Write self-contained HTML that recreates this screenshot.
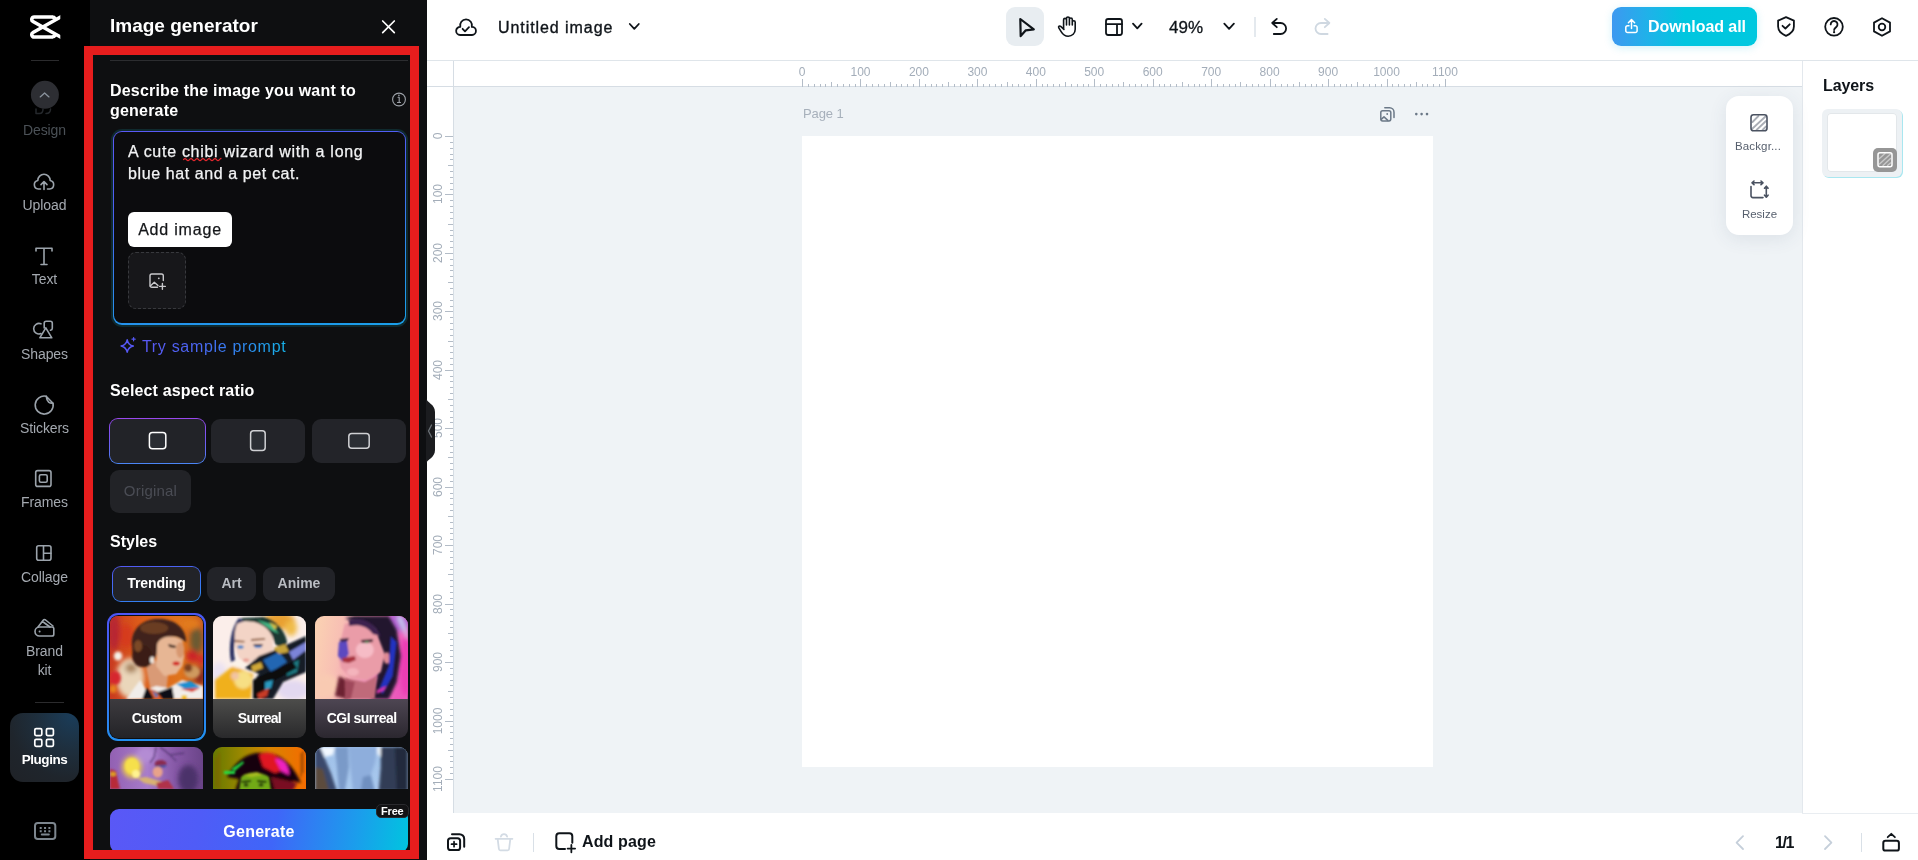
<!DOCTYPE html>
<html>
<head>
<meta charset="utf-8">
<title>Image generator</title>
<style>
*{box-sizing:border-box;margin:0;padding:0}
html,body{width:1918px;height:860px;overflow:hidden;background:#fff;font-family:"Liberation Sans",sans-serif;}
.abs{position:absolute}
#root{position:relative;width:1918px;height:860px;overflow:hidden;background:#fff;will-change:transform;transform:translateZ(0)}
/* ---------- left rail ---------- */
#rail{left:0;top:0;width:90px;height:860px;background:#000}
.rl{position:absolute;left:0;width:89px;text-align:center;color:#a4a9b0;font-size:14px;line-height:19px;letter-spacing:-.1px}
.ri{position:absolute}
/* ---------- panel ---------- */
#panel{left:90px;top:0;width:337px;height:860px;background:#0e0f11}
.h16{position:absolute;color:#fff;font-weight:700;font-size:16px;line-height:20px}
/* ---------- main ---------- */
#topbar{left:427px;top:0;width:1491px;height:61px;background:#fff;border-bottom:1px solid #dfe5ea}
#canvas{left:454px;top:87px;width:1348px;height:726px;background:#eff3f6}
#hruler{left:427px;top:61px;width:1375px;height:26px;background:#fff;border-bottom:1px solid #d6dde4}
#vruler{left:427px;top:61px;width:27px;height:752px;background:#fff;border-right:1px solid #d6dde4}
#layers{left:1802px;top:61px;width:116px;height:752px;background:#fff;border-left:1px solid #e3e8ed}
#bottombar{left:427px;top:813px;width:1491px;height:47px;background:#fff}
#page{left:802px;top:136px;width:631px;height:631px;background:#fff}
.rt{position:absolute;font-size:12px;color:#a3adb9;line-height:12px;white-space:nowrap}
</style>
</head>
<body>
<div id="root">

<!-- MAIN -->
<div id="topbar" class="abs"></div>
<div id="canvas" class="abs"></div>
<div id="hruler" class="abs"></div>
<div id="vruler" class="abs"></div>
<div id="page" class="abs"></div>
<div id="layers" class="abs"></div>
<div id="bottombar" class="abs"></div>
<svg class="abs" style="left:427px;top:61px" width="1375" height="26"><path d="M375.5 18V26M381.5 23V26M387.5 23V26M393.5 23V26M398.5 23V26M404.5 21V26M410.5 23V26M416.5 23V26M422.5 23V26M428.5 23V26M433.5 18V26M439.5 23V26M445.5 23V26M451.5 23V26M457.5 23V26M463.5 21V26M469.5 23V26M474.5 23V26M480.5 23V26M486.5 23V26M492.5 18V26M498.5 23V26M504.5 23V26M509.5 23V26M515.5 23V26M521.5 21V26M527.5 23V26M533.5 23V26M539.5 23V26M545.5 23V26M550.5 18V26M556.5 23V26M562.5 23V26M568.5 23V26M574.5 23V26M580.5 21V26M585.5 23V26M591.5 23V26M597.5 23V26M603.5 23V26M609.5 18V26M615.5 23V26M620.5 23V26M626.5 23V26M632.5 23V26M638.5 21V26M644.5 23V26M650.5 23V26M656.5 23V26M661.5 23V26M667.5 18V26M673.5 23V26M679.5 23V26M685.5 23V26M691.5 23V26M696.5 21V26M702.5 23V26M708.5 23V26M714.5 23V26M720.5 23V26M726.5 18V26M732.5 23V26M737.5 23V26M743.5 23V26M749.5 23V26M755.5 21V26M761.5 23V26M767.5 23V26M772.5 23V26M778.5 23V26M784.5 18V26M790.5 23V26M796.5 23V26M802.5 23V26M808.5 23V26M813.5 21V26M819.5 23V26M825.5 23V26M831.5 23V26M837.5 23V26M843.5 18V26M848.5 23V26M854.5 23V26M860.5 23V26M866.5 23V26M872.5 21V26M878.5 23V26M884.5 23V26M889.5 23V26M895.5 23V26M901.5 18V26M907.5 23V26M913.5 23V26M919.5 23V26M924.5 23V26M930.5 21V26M936.5 23V26M942.5 23V26M948.5 23V26M954.5 23V26M960.5 18V26M965.5 23V26M971.5 23V26M977.5 23V26M983.5 23V26M989.5 21V26M995.5 23V26M1000.5 23V26M1006.5 23V26M1012.5 23V26M1018.5 18V26" stroke="#b3bcc7" stroke-width="1" fill="none"/></svg>
<div class="rt" style="left:782.0px;top:66px;width:40px;text-align:center">0</div>
<div class="rt" style="left:840.5px;top:66px;width:40px;text-align:center">100</div>
<div class="rt" style="left:898.9px;top:66px;width:40px;text-align:center">200</div>
<div class="rt" style="left:957.4px;top:66px;width:40px;text-align:center">300</div>
<div class="rt" style="left:1015.8px;top:66px;width:40px;text-align:center">400</div>
<div class="rt" style="left:1074.2px;top:66px;width:40px;text-align:center">500</div>
<div class="rt" style="left:1132.7px;top:66px;width:40px;text-align:center">600</div>
<div class="rt" style="left:1191.2px;top:66px;width:40px;text-align:center">700</div>
<div class="rt" style="left:1249.6px;top:66px;width:40px;text-align:center">800</div>
<div class="rt" style="left:1308.1px;top:66px;width:40px;text-align:center">900</div>
<div class="rt" style="left:1366.5px;top:66px;width:40px;text-align:center">1000</div>
<div class="rt" style="left:1425.0px;top:66px;width:40px;text-align:center">1100</div>
<svg class="abs" style="left:427px;top:61px" width="26" height="752"><path d="M18 75.5H26M23 81.5H26M23 87.5H26M23 93.5H26M23 98.5H26M21 104.5H26M23 110.5H26M23 116.5H26M23 122.5H26M23 128.5H26M18 133.5H26M23 139.5H26M23 145.5H26M23 151.5H26M23 157.5H26M21 163.5H26M23 169.5H26M23 174.5H26M23 180.5H26M23 186.5H26M18 192.5H26M23 198.5H26M23 204.5H26M23 209.5H26M23 215.5H26M21 221.5H26M23 227.5H26M23 233.5H26M23 239.5H26M23 245.5H26M18 250.5H26M23 256.5H26M23 262.5H26M23 268.5H26M23 274.5H26M21 280.5H26M23 285.5H26M23 291.5H26M23 297.5H26M23 303.5H26M18 309.5H26M23 315.5H26M23 320.5H26M23 326.5H26M23 332.5H26M21 338.5H26M23 344.5H26M23 350.5H26M23 356.5H26M23 361.5H26M18 367.5H26M23 373.5H26M23 379.5H26M23 385.5H26M23 391.5H26M21 396.5H26M23 402.5H26M23 408.5H26M23 414.5H26M23 420.5H26M18 426.5H26M23 432.5H26M23 437.5H26M23 443.5H26M23 449.5H26M21 455.5H26M23 461.5H26M23 467.5H26M23 472.5H26M23 478.5H26M18 484.5H26M23 490.5H26M23 496.5H26M23 502.5H26M23 508.5H26M21 513.5H26M23 519.5H26M23 525.5H26M23 531.5H26M23 537.5H26M18 543.5H26M23 548.5H26M23 554.5H26M23 560.5H26M23 566.5H26M21 572.5H26M23 578.5H26M23 584.5H26M23 589.5H26M23 595.5H26M18 601.5H26M23 607.5H26M23 613.5H26M23 619.5H26M23 624.5H26M21 630.5H26M23 636.5H26M23 642.5H26M23 648.5H26M23 654.5H26M18 660.5H26M23 665.5H26M23 671.5H26M23 677.5H26M23 683.5H26M21 689.5H26M23 695.5H26M23 700.5H26M23 706.5H26M23 712.5H26M18 718.5H26" stroke="#b3bcc7" stroke-width="1" fill="none"/></svg>
<div class="rt" style="left:417.5px;top:130.0px;width:40px;text-align:center;transform:rotate(-90deg)">0</div>
<div class="rt" style="left:417.5px;top:188.4px;width:40px;text-align:center;transform:rotate(-90deg)">100</div>
<div class="rt" style="left:417.5px;top:246.9px;width:40px;text-align:center;transform:rotate(-90deg)">200</div>
<div class="rt" style="left:417.5px;top:305.4px;width:40px;text-align:center;transform:rotate(-90deg)">300</div>
<div class="rt" style="left:417.5px;top:363.8px;width:40px;text-align:center;transform:rotate(-90deg)">400</div>
<div class="rt" style="left:417.5px;top:422.2px;width:40px;text-align:center;transform:rotate(-90deg)">500</div>
<div class="rt" style="left:417.5px;top:480.7px;width:40px;text-align:center;transform:rotate(-90deg)">600</div>
<div class="rt" style="left:417.5px;top:539.2px;width:40px;text-align:center;transform:rotate(-90deg)">700</div>
<div class="rt" style="left:417.5px;top:597.6px;width:40px;text-align:center;transform:rotate(-90deg)">800</div>
<div class="rt" style="left:417.5px;top:656.1px;width:40px;text-align:center;transform:rotate(-90deg)">900</div>
<div class="rt" style="left:417.5px;top:714.5px;width:40px;text-align:center;transform:rotate(-90deg)">1000</div>
<div class="rt" style="left:417.5px;top:773.0px;width:40px;text-align:center;transform:rotate(-90deg)">1100</div>
<!-- top bar text -->
<div class="abs" style="left:498px;top:18px;font-size:16px;line-height:20px;color:#0f1419;letter-spacing:.93px;white-space:nowrap;-webkit-text-stroke:.35px #0f1419">Untitled image</div>
<div class="abs" style="left:1006px;top:7px;width:38px;height:39px;border-radius:9px;background:#e8edf1"></div>
<div class="abs" style="left:1169px;top:18px;font-size:17px;line-height:20px;color:#0f1419;white-space:nowrap;-webkit-text-stroke:.3px #0f1419">49%</div>
<div class="abs" style="left:1254px;top:17px;width:2px;height:20px;background:#e4e9ee"></div>
<div class="abs" style="left:1612px;top:7px;width:145px;height:39px;border-radius:9px;background:linear-gradient(90deg,#3d99f0 0%,#1fb2e9 25%,#00c6df 50%,#00c8df 100%);box-shadow:0 2px 8px rgba(0,190,220,.18)"></div>
<div class="abs" style="left:1648px;top:17px;font-size:16px;font-weight:700;line-height:20px;color:#fff;white-space:nowrap;letter-spacing:-.06px">Download all</div>
<div class="abs" style="left:427px;top:86px;width:27px;height:1px;background:#d6dde4"></div>
<!-- page label -->
<div class="abs" style="left:803px;top:106px;font-size:13px;line-height:16px;color:#a7b0bb;white-space:nowrap;letter-spacing:-.1px">Page 1</div>
<!-- floating card -->
<div class="abs" style="left:1726px;top:96px;width:67px;height:139px;border-radius:13px;background:#fff;box-shadow:0 4px 18px rgba(60,80,110,.10)"></div>
<div class="abs" style="left:1724.5px;top:139px;width:67px;text-align:center;font-size:11.5px;line-height:14px;color:#565f6d;white-space:nowrap;letter-spacing:.15px">Backgr...</div>
<div class="abs" style="left:1726px;top:207px;width:67px;text-align:center;font-size:11.5px;line-height:14px;color:#565f6d;white-space:nowrap">Resize</div>
<!-- layers -->
<div class="abs" style="left:1823px;top:76px;font-size:16px;font-weight:700;line-height:20px;color:#0f1419;white-space:nowrap;letter-spacing:-.1px">Layers</div>
<div class="abs" style="left:1822px;top:109px;width:80px;height:68px;border-radius:6px;background:#edf1f4;box-shadow:1px 1px 0 #a9e7f0"></div>
<div class="abs" style="left:1827px;top:113px;width:70px;height:59px;border-radius:4px;background:#fff;box-shadow:inset 0 0 0 1px #e3e7ea"></div>
<div class="abs" style="left:1873px;top:148px;width:24px;height:24px;border-radius:5px;background:#969696"></div>
<!-- bottom bar text -->
<div class="abs" style="left:582px;top:832px;font-size:16px;font-weight:700;line-height:20px;color:#0f1419;white-space:nowrap;letter-spacing:.14px">Add page</div>
<div class="abs" style="left:1775px;top:833px;font-size:16px;font-weight:700;line-height:20px;color:#0f1419;white-space:nowrap;letter-spacing:-1.4px">1/1</div>
<div class="abs" style="left:533px;top:833px;width:1px;height:19px;background:#d9e0e7"></div>
<div class="abs" style="left:1861px;top:833px;width:1px;height:19px;background:#d9e0e7"></div>
<div class="abs" style="left:1802px;top:813px;width:116px;height:1px;background:#e9edf1"></div>
<!-- icons overlay -->
<svg class="abs" style="left:0;top:0" width="1918" height="860" fill="none" stroke="#0f1419" stroke-width="1.8" stroke-linecap="round" stroke-linejoin="round">
 <!-- cloud check -->
 <path d="M460.1 35H472A4.05 4.05 0 0 0 471.8 26.9A5.95 5.95 0 1 0 460.3 26.9A4.05 4.05 0 0 0 460.1 35Z"/>
 <path d="M462.6 28.8L465 31.3L469 27.2"/>
 <!-- title chevron -->
 <path d="M629.8 24L634.3 28.8L638.8 24"/>
 <!-- cursor -->
 <path d="M1020.3 19L1033.8 29.3L1025.8 30.3L1020.7 36.1Z" stroke-width="2.2"/>
 <!-- hand -->
 <path stroke-width="1.6" d="M1063.6 29V19.8a1.45 1.45 0 0 1 2.9 0V25M1066.5 25V18.4a1.45 1.45 0 0 1 2.9 0V25M1069.4 25V19.4a1.45 1.45 0 0 1 2.9 0V25M1072.3 25V22.2a1.45 1.45 0 0 1 2.9 0V29.2c0 4.2-3 7-7 7c-3.4 0-5.4-1.9-6.9-4.4l-2.5-4c-.8-1.3.8-2.4 1.9-1.4l3.2 3"/>
 <!-- layout -->
 <rect x="1106" y="19" width="16" height="16" rx="2.2"/>
 <path d="M1106 24.2H1122M1117 24.2V35"/>
 <path d="M1133 23.6L1137.3 28.4L1141.6 23.6"/>
 <path d="M1224.3 23.6L1229.1 28.8L1233.9 23.6"/>
 <!-- undo / redo -->
 <path d="M1276.8 18.9L1272.2 23L1276.8 27.2M1272.6 23H1280.6A5.5 5.5 0 0 1 1280.6 34H1273.8"/>
 <path stroke="#cfd8e1" d="M1324.8 18.9L1329.4 23L1324.8 27.2M1329 23H1321A5.5 5.5 0 0 0 1321 34H1327.6"/>
 <!-- download icon -->
 <g stroke="#fff" stroke-width="1.5">
  <path d="M1629 25.8H1627.6a1.8 1.8 0 0 0-1.8 1.8V30.7a1.8 1.8 0 0 0 1.8 1.8H1635.3a1.8 1.8 0 0 0 1.8-1.8V27.6a1.8 1.8 0 0 0-1.8-1.8H1634"/>
  <path d="M1631.5 28.4V19.8M1628.4 22.8L1631.5 19.6L1634.6 22.8"/>
 </g>
 <!-- shield -->
 <path d="M1786 17.2L1793.9 20.6V26.5C1793.9 31 1790.6 34 1786 35.8C1781.4 34 1778.1 31 1778.1 26.5V20.6Z"/>
 <path d="M1782.5 25.8L1785.4 28.5L1789.7 24.3"/>
 <!-- help -->
 <circle cx="1834" cy="26.8" r="8.8"/>
 <path d="M1830.7 24.4a3.4 3.4 0 1 1 5.6 2.6c-1.2 1-2.2 1.7-2.2 3"/>
 <circle cx="1834.1" cy="32.2" r="1.1" fill="#0f1419" stroke="none"/>
 <!-- hex -->
 <path d="M1882 18.2L1890 22.6V31.4L1882 35.8L1874 31.4V22.6Z"/>
 <circle cx="1882" cy="27" r="3.3"/>
 <!-- page icons -->
 <g stroke="#6b7887" stroke-width="1.5">
  <rect x="1380.8" y="110.7" width="10" height="10.2" rx="1.8"/>
  <path d="M1384.8 107.8H1389.6A4.4 4.4 0 0 1 1394 112.2V117.4"/>
  <path d="M1381.2 119.4L1384 116.9L1387.8 120.4"/>
  <circle cx="1387.2" cy="114" r=".9" fill="#6b7887" stroke="none"/>
  <circle cx="1416.3" cy="114.1" r="1.3" fill="#6b7887" stroke="none"/>
  <circle cx="1421.6" cy="114.1" r="1.3" fill="#6b7887" stroke="none"/>
  <circle cx="1427" cy="114.1" r="1.3" fill="#6b7887" stroke="none"/>
 </g>
 <!-- floating card icons -->
 <g stroke="#4a5261" stroke-width="1.6">
  <path stroke="#a9adb5" stroke-width="1.8" d="M1752.5 122L1758.5 116M1752.5 128.5L1765.5 116.5M1756.5 130L1766 121M1762.5 130L1766 126.5"/>
  <rect x="1751" y="114.8" width="16" height="16" rx="2.6"/>
  <path d="M1763 197.6H1753A2 2 0 0 1 1751 195.600V186.500"/>
  <path d="M1752.200 182.800H1762.800M1754 181L1752 182.800L1754 184.600M1761 181L1763 182.800L1761 184.600"/>
  <path d="M1766.300 186.400V197M1764.500 188.200L1766.300 186.200L1768.100 188.200M1764.500 195.200L1766.300 197.200L1768.100 195.200"/>
 </g>
 <!-- layer thumb icon -->
 <g stroke="#fff" stroke-width="1.5">
  <path stroke="#c9c9c9" stroke-width="1.4" d="M1879.500 158.500L1885 153.500M1879.500 164L1890.500 154M1883 165.500L1890.500 158.500M1887.500 165.500L1890.500 163"/>
  <rect x="1878" y="152.700" width="14" height="14" rx="2"/>
 </g>
 <!-- bottom icons -->
 <g stroke-width="2">
  <rect x="448" y="838.2" width="12.100" height="11.800" rx="2.600"/>
  <path d="M452 834.200H459.500A4.700 4.700 0 0 1 464.200 838.900V846.800"/>
  <path stroke-width="1.700" d="M451.500 844.200H456.600M454.050 841.700V846.700"/>
  <path d="M572.300 842.700V836.200A3 3 0 0 0 569.300 833.200H559.300A3 3 0 0 0 556.300 836.200V846.100A3 3 0 0 0 559.300 849.100H565"/>
  <path stroke-width="1.800" d="M567.600 848.600H575.100M571.350 844.900V852.300"/>
  <rect x="1883.300" y="840.700" width="15.600" height="9.900" rx="2.200"/>
 </g>
 <path d="M1887.700 837.200L1891.300 833.800L1894.900 837.200"/>
 <g stroke="#d3dbe4">
  <path d="M495.600 838.800H512.400M497.700 839.200L498.900 849A1.500 1.500 0 0 0 500.400 850.300H507.600A1.500 1.500 0 0 0 509.100 849L510.300 839.200M500.900 836.600A3.200 3.200 0 0 1 507.100 836.600"/>
  <path stroke="#c5cfda" d="M1743 836.200L1736.600 842.600L1743 849"/>
  <path stroke="#c5cfda" d="M1825 836.200L1831.400 842.600L1825 849"/>
 </g>
</svg>


<!-- RAIL -->
<div id="rail" class="abs"></div>
<div class="abs" style="left:31px;top:60px;width:28px;height:1px;background:#2b2b2d"></div>
<div class="abs" style="left:35px;top:702px;width:29px;height:1px;background:#2b2b2d"></div>
<div class="abs" style="left:10px;top:713px;width:69px;height:69px;border-radius:13px;background:radial-gradient(circle at 92% 2%,#1a3d5a 0%,#1e2f3e 38%,#1f252c 70%,#1f2227 100%)"></div>
<div class="rl" style="top:121px;color:#4b5157">Design</div>
<div class="rl" style="top:196px">Upload</div>
<div class="rl" style="top:270px">Text</div>
<div class="rl" style="top:345px">Shapes</div>
<div class="rl" style="top:419px">Stickers</div>
<div class="rl" style="top:493px">Frames</div>
<div class="rl" style="top:568px">Collage</div>
<div class="rl" style="top:642px">Brand</div>
<div class="rl" style="top:661px">kit</div>
<div class="rl" style="top:750px;color:#fff;font-weight:700;font-size:13.5px;letter-spacing:-.45px">Plugins</div>
<svg class="abs" style="left:0;top:0" width="90" height="860" fill="none" stroke="#9ba3ab" stroke-width="1.6" stroke-linecap="round" stroke-linejoin="round">
 <!-- logo -->
 <g stroke="#fff" stroke-width="3.5" stroke-linecap="butt" clip-path="url(#lc)">
  <clipPath id="lc"><rect x="28" y="13" width="32.3" height="28"/></clipPath>
  <path d="M52.5 17H34.2a2.4 2.4 0 0 0-1.2 4.500L62 37.800"/>
  <path d="M52.500 37H34.200a2.400 2.400 0 0 1-1.200-4.500L62 16.200"/>
  <path d="M52 17c1.500 0 2.600.600 3.200 1.600M52 37c1.500 0 2.600-.600 3.200-1.600"/>
 </g>
 <!-- dim design icon remnants -->
 <path stroke="#25282c" stroke-width="1.500" d="M36 109v4.500h3.500c2.500 0 3.500-2 3.500-4.500M46 113.500c3 0 4.500-1.800 4.500-4.500"/>
 <circle cx="44.900" cy="94.800" r="14" fill="#2d2e33" stroke="none"/>
 <path stroke="#8b949e" stroke-width="1.300" d="M40.200 96.900L44.600 92.900L49 96.900"/>
 <!-- upload -->
 <path d="M40.500 189H38.300A4.300 4.300 0 0 1 37.800 180.500A6.200 6.200 0 0 1 50.200 180.500A4.300 4.300 0 0 1 49.700 189H47.500"/>
 <path d="M44 189.500V181.800M41 184.600L44 181.500L47 184.600"/>
 <!-- text -->
 <path d="M36 251V248.300H52V251M44 248.300V264.500M41 264.500H47"/>
 <!-- shapes -->
 <path d="M41 333.600A5.300 5.300 0 1 1 41 323.800"/>
 <path d="M44.200 328V323.300A2 2 0 0 1 46.200 321.300H50.300A2 2 0 0 1 52.300 323.300V328.300A2 2 0 0 1 50.500 330.300"/>
 <path d="M45.800 327.800L51.800 337.800H39.800Z"/>
 <!-- stickers -->
 <path d="M46.200 396.300A9 9 0 1 0 53 403.200"/>
 <path d="M46.200 396.300L53 403.200C50 403.800 46.600 401.800 46.200 396.300Z"/>
 <!-- frames -->
 <rect x="35.700" y="470.600" width="15.300" height="15.800" rx="2"/>
 <rect x="39.400" y="474.700" width="7.800" height="7.600" rx="1.500"/>
 <!-- collage -->
 <rect x="36.700" y="545.700" width="14.300" height="14.500" rx="2"/>
 <path d="M43.500 545.700V560.200M43.500 553.200H51"/>
 <!-- brand kit -->
 <path d="M39.500 627H52A1.800 1.800 0 0 1 53.800 628.800V634.200A1.800 1.800 0 0 1 52 636H39.500A4.500 4.500 0 0 1 39.500 627Z"/>
 <circle cx="39.600" cy="631.500" r="1" fill="#9ba3ab" stroke="none"/>
 <path d="M38 627L43.200 620.200C43.800 619.400 44.800 619.400 45.600 620L53 626M42.500 621.500L50 627"/>
 <!-- plugins -->
 <g stroke="#fff" stroke-width="1.700">
  <rect x="34.800" y="728.600" width="7" height="7" rx="1.300"/>
  <rect x="46.400" y="728.600" width="7" height="7" rx="1.300"/>
  <rect x="34.800" y="739.400" width="7" height="7" rx="1.300"/>
  <rect x="46.400" y="739.400" width="7" height="7" rx="1.300"/>
 </g>
 <!-- keyboard -->
 <g stroke="#7d868e" stroke-width="2">
  <rect x="35" y="823" width="20.300" height="16.100" rx="2.800"/>
  <path stroke-width="2" stroke-linecap="butt" stroke-dasharray="2 2.350" d="M39.700 827.900H51M39.700 831.300H51"/>
  <path stroke-width="2" d="M41.800 834.600H48.800"/>
 </g>
</svg>


<!-- PANEL -->
<div id="panel" class="abs"></div>
<style>
.gb{position:absolute;border-radius:9px;background:linear-gradient(180deg,#9a48ee 0%,#7656f2 45%,#4a86f6 100%)}
.gb>i{position:absolute;left:1.3px;top:1.3px;right:1.3px;bottom:1.3px;border-radius:7.7px;background:#222328;display:block}
.ab{position:absolute;top:419px;width:94px;height:44px;border-radius:9px;background:#232429}
.tab{position:absolute;top:567px;height:34px;border-radius:9px;background:#222328;color:#b9bcc2;font-weight:700;font-size:14px;line-height:33px;text-align:center}
.card{position:absolute;border-radius:9px;overflow:hidden;background:#2a2a2e}
.card svg{display:block}
.cl{position:absolute;left:0;right:0;top:81px;height:40px;color:#fff;font-weight:700;font-size:14px;line-height:40px;text-align:center;white-space:nowrap;padding-top:1px}
</style>
<div class="abs" style="left:110px;top:14.5px;font-size:19px;font-weight:700;line-height:22px;color:#fff;white-space:nowrap">Image generator</div>
<div class="abs" style="left:110px;top:60px;width:298px;height:1px;background:#2c2d30"></div>
<div class="h16" style="left:110px;top:81px;width:260px;letter-spacing:.2px">Describe the image you want to generate</div>
<!-- textarea -->
<div class="abs" style="left:111px;top:129px;width:297.300px;height:197.600px;border-radius:11px;background:#0f2a2e"></div>
<div class="abs" style="left:113px;top:131px;width:293.300px;height:193.600px;border-radius:9px;background:linear-gradient(170deg,#5b58f6 0%,#4a63f4 35%,#2a8cee 70%,#1a9fe9 100%)"></div>
<div class="abs" style="left:114.300px;top:132.300px;width:290.700px;height:191px;border-radius:7.700px;background:#0c0c0e"></div>
<div class="abs" style="left:128px;top:141px;width:270px;font-size:16px;line-height:22px;color:#f2f3f4;white-space:nowrap;-webkit-text-stroke:.25px #f2f3f4"><span style="letter-spacing:.71px">A cute chibi wizard with a long</span><br><span style="letter-spacing:.6px">blue hat and a pet cat.</span></div>
<div class="abs" style="left:128px;top:212px;width:104px;height:35px;border-radius:6px;background:#fff"></div>
<div class="abs" style="left:128px;top:212px;width:104px;height:35px;font-size:16px;line-height:35px;text-align:center;color:#15171a;letter-spacing:.8px;white-space:nowrap;-webkit-text-stroke:.25px #15171a">Add image</div>
<div class="abs" style="left:128px;top:252px;width:58px;height:57px;border-radius:8px;background:#17171a;border:1px dashed #38393d"></div>
<div class="abs" style="left:142px;top:336.5px;font-size:16px;line-height:20px;letter-spacing:.68px;white-space:nowrap;background:linear-gradient(90deg,#5a58f5 0%,#4a67f4 40%,#2a8ff0 75%,#16b4ea 100%);-webkit-background-clip:text;background-clip:text;color:transparent">Try sample prompt</div>
<div class="h16" style="left:110px;top:381px;letter-spacing:.16px;white-space:nowrap">Select aspect ratio</div>
<div class="gb" style="left:109px;top:418px;width:97px;height:46px"><i></i></div>
<div class="ab" style="left:211px"></div>
<div class="ab" style="left:312px"></div>
<div class="abs" style="left:110px;top:470px;width:81px;height:43px;border-radius:9px;background:#222327;color:#4a4c54;font-size:15px;line-height:42px;text-align:center;letter-spacing:.2px">Original</div>
<div class="h16" style="left:110px;top:532px;white-space:nowrap">Styles</div>
<div class="gb" style="left:112px;top:566px;width:89px;height:36px;background:linear-gradient(170deg,#5558f5 0%,#3f6ff3 50%,#2a8df0 100%)"><i style="background:#222328"></i></div>
<div class="abs" style="left:112px;top:566px;width:89px;height:36px;line-height:35px;text-align:center;color:#fff;font-weight:700;font-size:14px;letter-spacing:-.1px">Trending</div>
<div class="tab" style="left:207px;width:49px">Art</div>
<div class="tab" style="left:263px;width:72px">Anime</div>
<!-- cards -->
<div class="gb" style="left:107px;top:613px;width:99.300px;height:127.700px;border-radius:11px;background:linear-gradient(175deg,#4d55f6 0%,#3a6ff3 50%,#2093f0 100%)"><i style="left:2px;top:2px;right:2px;bottom:2px;border-radius:9.500px;background:#0e0f11"></i></div>
<svg width="0" height="0" style="position:absolute"><defs>
<filter id="b0" x="-10%" y="-10%" width="120%" height="120%"><feGaussianBlur stdDeviation=".95"/></filter>
<filter id="b1" x="-10%" y="-10%" width="120%" height="120%"><feGaussianBlur stdDeviation="1.5"/></filter>
<filter id="b2" x="-10%" y="-10%" width="120%" height="120%"><feGaussianBlur stdDeviation="2.4"/></filter>
<linearGradient id="g1" x1="0" y1="0" x2="1" y2="0"><stop offset="0" stop-color="#c83a20"/><stop offset=".3" stop-color="#dc5a1a"/><stop offset=".75" stop-color="#df741c"/><stop offset="1" stop-color="#c65a22"/></linearGradient>
<linearGradient id="g3" x1="0" y1="0" x2="1" y2=".15"><stop offset="0" stop-color="#fbd3b2"/><stop offset=".3" stop-color="#f8bfb4"/><stop offset=".7" stop-color="#f08cba"/><stop offset="1" stop-color="#ec58bc"/></linearGradient>
<linearGradient id="g4" x1="0" y1="0" x2="1" y2="0"><stop offset="0" stop-color="#9260b2"/><stop offset=".4" stop-color="#a87ccb"/><stop offset=".7" stop-color="#8658a6"/><stop offset="1" stop-color="#6a4488"/></linearGradient>
<linearGradient id="g5" x1="0" y1="0" x2="1" y2="0"><stop offset="0" stop-color="#667800"/><stop offset=".3" stop-color="#9a8800"/><stop offset=".6" stop-color="#d88400"/><stop offset="1" stop-color="#f46c00"/></linearGradient>
<linearGradient id="g6" x1="0" y1="0" x2="0" y2="1"><stop offset="0" stop-color="#9fc0e8"/><stop offset=".5" stop-color="#a9c9ee"/><stop offset="1" stop-color="#bcd6f2"/></linearGradient>
</defs></svg>
<!-- card 1 -->
<div class="card" style="left:110.200px;top:616px;width:93.300px;height:121.800px;border-radius:8px;background:linear-gradient(180deg,#3d3b3f 83px,#232327 100%)">
<svg width="93.300" height="83" viewBox="0 0 93 83" preserveAspectRatio="none"><rect width="93" height="83" fill="url(#g1)"/>
<g filter="url(#b2)">
 <ellipse cx="16" cy="20" rx="7" ry="12" fill="#d63a1c"/>
 <ellipse cx="4" cy="16" rx="6" ry="18" fill="#b82630"/>
 <ellipse cx="86" cy="24" rx="6" ry="14" fill="#6a5a30"/><ellipse cx="80" cy="8" rx="10" ry="6" fill="#e27a1c"/>
 <ellipse cx="82" cy="40" rx="6" ry="6" fill="#cc2428"/><ellipse cx="91" cy="44" rx="4" ry="5" fill="#d42a2a"/>
 <ellipse cx="90" cy="60" rx="6" ry="8" fill="#8a2c1a"/>
 <ellipse cx="20" cy="62" rx="14" ry="20" fill="#ead6ba"/>
 <ellipse cx="21" cy="52" rx="6" ry="5" fill="#a8825c"/>
</g>
<g filter="url(#b1)">
 <ellipse cx="8" cy="40" rx="4.200" ry="4.600" fill="#f6f2ea"/>
 <ellipse cx="5" cy="62" rx="6" ry="7" fill="#d6262e"/><ellipse cx="3" cy="73" rx="3.500" ry="4" fill="#e8801c"/>
 <ellipse cx="82" cy="56" rx="8" ry="6.500" fill="#cf9a5e"/><ellipse cx="78" cy="52" rx="4" ry="4" fill="#7a3c1c"/>
</g>
<g filter="url(#b0)">
 <path d="M22 30C20 12 34 2 50 3C64 3 76 12 76 26L72 24C66 18 56 20 50 26L46 40L40 52L30 50C24 46 22 38 22 30Z" fill="#41241a"/>
 <ellipse cx="32" cy="40" rx="10" ry="11" fill="#3a1f15"/>
 <ellipse cx="44" cy="12" rx="14" ry="6" fill="#6b3c22"/><ellipse cx="28" cy="30" rx="4" ry="6" fill="#7c4826"/>
 <path d="M36 52L46 44L58 58L56 76L40 72Z" fill="#d99a76"/>
 <path d="M47 28C50 20 62 18 72 24L74 40L72 50L66 58L54 60L46 50Z" fill="#e7b694"/>
 <ellipse cx="70" cy="34" rx="4" ry="8" fill="#d89870"/>
 <path d="M58 28L66 30L65 32L59 31Z" fill="#2a1610"/>
 <ellipse cx="66" cy="47.500" rx="3.600" ry="1.900" fill="#d21e1e"/>
 <ellipse cx="42" cy="44" rx="2.200" ry="3.600" fill="#ece4dc"/>
 <path d="M16 83L30 64L36 74L46 70L58 72L72 64L93 70V83Z" fill="#f1edea"/>
 <path d="M32 83L36 72L48 76L62 71L64 83Z" fill="#111115"/>
 <path d="M66 68L80 65L90 71L76 74Z" fill="#1e8fd0"/><path d="M70 73L90 72L82 76Z" fill="#dd3c2a"/>
 <path d="M38 72L46 75L52 83H44Z" fill="#e0602a"/><path d="M42 74L48 79L46 82Z" fill="#2a7ac0"/>
 <ellipse cx="74" cy="81" rx="3" ry="2" fill="#f0c21e"/>
</g></svg><div class="cl" style="letter-spacing:-.35px">Custom</div></div>
<!-- card 2 -->
<div class="card" style="left:212.800px;top:616px;width:93.100px;height:121.800px;background:linear-gradient(180deg,#4d4d4b 83px,#29292b 100%)">
<svg width="93.100" height="83" viewBox="0 0 93 83" preserveAspectRatio="none"><rect width="93" height="83" fill="#fbeeea"/>
<g filter="url(#b2)">
 <ellipse cx="66" cy="5" rx="16" ry="9" fill="#e8a030"/><ellipse cx="78" cy="12" rx="6" ry="8" fill="#f0bc48"/>
 <ellipse cx="6" cy="60" rx="8" ry="14" fill="#ebe2f2"/>
 <ellipse cx="80" cy="74" rx="16" ry="10" fill="#e2d8f0"/>
 <ellipse cx="88" cy="46" rx="6" ry="8" fill="#8a92e0"/>
</g>
<g filter="url(#b1)">
 <path d="M2 83V64L20 50L40 58L38 83Z" fill="#f0b01e"/>
 <ellipse cx="30" cy="64" rx="9" ry="9" fill="#f7df84"/><ellipse cx="22" cy="60" rx="4" ry="4" fill="#f2c4a2"/>
 <ellipse cx="26" cy="48" rx="8" ry="4" fill="#fbf2e8"/>
</g>
<g filter="url(#b0)">
 <path d="M26 2C18 12 15 30 18 46L22 44C19 30 23 14 31 5Z" fill="#2a3062"/>
 <path d="M28 2L50 1C62 4 72 14 74 26L70 34L62 28C60 18 50 8 30 5Z" fill="#1b3830"/>
 <path d="M44 4L58 8L66 18L58 14Z" fill="#42b482"/><path d="M56 6L64 10L62 14Z" fill="#d8c040"/>
 <path d="M24 8C34 2 54 6 60 22L60 40L46 42L34 48L26 42C21 32 20 18 24 8Z" fill="#f3d4c6"/>
 <path d="M22 24L32 25L31 26.500L22 26Z" fill="#8c5c3c"/><path d="M38 23L52 22L52 23.800L38 25Z" fill="#8c5c3c"/>
 <ellipse cx="27.500" cy="31" rx="3.200" ry="1.800" fill="#4a84c8"/><ellipse cx="45" cy="30" rx="4" ry="2" fill="#4a8ad2"/>
 <ellipse cx="45" cy="29" rx="5" ry="1" fill="#4a2826"/>
 <ellipse cx="33" cy="44" rx="3" ry="1.500" fill="#e89a90"/>
 <path d="M32 52L46 40L62 34L93 20V56L70 66L60 83H40L40 66L46 58Z" fill="#121a26"/>
 <path d="M50 44L66 36L74 46L58 56Z" fill="#2466b2"/><path d="M60 32L72 28L76 36L66 38Z" fill="#c8a43a"/>
 <path d="M72 50L86 44L84 56L74 60Z" fill="#1c7c84"/><path d="M76 36L93 26V34L80 44Z" fill="#7c84d8"/>
 <path d="M40 64L56 56L80 46L84 52L62 64L52 83H40Z" fill="#08080c"/>
 <path d="M52 66L60 64L58 72L52 74Z" fill="#2a9ac0"/><path d="M44 78L56 72L54 80L46 83Z" fill="#c83a28"/>
 <path d="M38 50L48 46L50 52L40 56Z" fill="#d0a838"/>
</g></svg><div class="cl" style="letter-spacing:-.75px">Surreal</div></div>
<!-- card 3 -->
<div class="card" style="left:315.300px;top:616px;width:92.700px;height:121.800px;background:linear-gradient(180deg,#4e4653 83px,#2b272f 100%)">
<svg width="92.700" height="83" viewBox="0 0 93 83" preserveAspectRatio="none"><rect width="93" height="83" fill="url(#g3)"/>
<g filter="url(#b2)">
 <ellipse cx="84" cy="6" rx="12" ry="10" fill="#b264d2"/>
 <ellipse cx="91" cy="50" rx="6" ry="30" fill="#ec3cb4"/>
 <ellipse cx="10" cy="70" rx="14" ry="12" fill="#f9cab2"/>
 <path d="M82 0L86 0L93 18V24Z" fill="#cfe4fa"/>
</g>
<g filter="url(#b1)">
 <path d="M30 2L40 0H74L82 14L86 40L82 66L74 83H56L62 62L66 40L60 14L44 8Z" fill="#22122e"/>
 <path d="M24 60L20 80L32 83L36 66Z" fill="#6c2230"/>
</g>
<g filter="url(#b0)">
 <path d="M30 8C40 4 56 8 62 18L70 38L66 56L52 64L36 62L26 52L23 36Z" fill="#ea9ca8"/>
 <ellipse cx="50" cy="34" rx="9" ry="8" fill="#f6bcc6"/><ellipse cx="38" cy="56" rx="6" ry="4" fill="#f4b4bc"/>
 <path d="M24 26L32 24L34 38L28 46L23 40Z" fill="#5c4ac0"/>
 <path d="M30 62L50 66L62 60L60 83H32L30 72Z" fill="#c06a7a"/><path d="M30 64L40 66L36 83H30Z" fill="#a04a5c"/>
 <ellipse cx="72" cy="42" rx="3" ry="6" fill="#e08a94"/>
 <path d="M25 23L34 22L33 25L26 26Z" fill="#3a2040"/><path d="M46 24L58 23L58 26L47 27Z" fill="#4a2a38"/>
 <ellipse cx="52" cy="26" rx="2" ry="1.200" fill="#5a8a5a"/>
 <path d="M27 42L40 40L41 44L34 47L28 46Z" fill="#a8323c"/>
 <path d="M76 20L82 26L78 60L68 78L64 74L74 50Z" fill="#2432c0"/>
 <path d="M62 74L72 70L70 74L62 78Z" fill="#d030a8"/>
 <path d="M34 4C46 0 60 6 66 20L58 18C52 10 44 8 34 10Z" fill="#3c2250"/>
</g></svg><div class="cl" style="letter-spacing:-.5px">CGI surreal</div></div>
<!-- row 2 -->
<div class="card" style="left:110.200px;top:747px;width:93.300px;height:60px">
<svg width="93.300" height="83" viewBox="0 0 93 83" preserveAspectRatio="none"><rect width="93" height="83" fill="url(#g4)"/>
<g filter="url(#b2)">
 <ellipse cx="78" cy="32" rx="10" ry="14" fill="#4c306a"/>
 <ellipse cx="22" cy="20" rx="10" ry="11" fill="#e8c850"/>
 <ellipse cx="36" cy="8" rx="10" ry="8" fill="#b48cd4"/>
</g>
<g filter="url(#b0)">
 <path d="M46 0L44 10L40 16M50 0L60 8L74 6M60 8L66 14" stroke="#4a2e68" stroke-width="1" fill="none"/>
 <ellipse cx="22" cy="19" rx="7" ry="8" fill="#f6e04c"/><ellipse cx="26" cy="27" rx="4" ry="4" fill="#fff390"/>
 <path d="M0 22L6 24L8 34L10 42H0Z" fill="#b82a38"/><ellipse cx="3" cy="27" rx="3" ry="2" fill="#e0a224"/>
 <ellipse cx="50.500" cy="17" rx="6" ry="4" fill="#8a2c50"/><path d="M45 19L56 18L56 20L45 21Z" fill="#3a5ab0"/>
 <ellipse cx="47.500" cy="25" rx="5" ry="5.500" fill="#e8a28a"/>
 <path d="M27 31L36 30L50 34L56 36L52 40L34 36Z" fill="#d8b272"/>
 <path d="M46 36L58 33L64 42H48Z" fill="#b03048"/>
</g></svg></div>
<div class="card" style="left:212.800px;top:747px;width:93.100px;height:60px">
<svg width="93.100" height="83" viewBox="0 0 93 83" preserveAspectRatio="none"><rect width="93" height="83" fill="url(#g5)"/>
<g filter="url(#b1)">
 <path d="M14 30C22 14 36 4 50 6C66 4 80 18 88 36L80 34L70 44H22L26 32Z" fill="#12060a"/>
 <path d="M46 8C56 2 68 8 72 22L62 26L50 20Z" fill="#e01222"/>
 <path d="M62 12C70 10 76 18 76 28L68 24Z" fill="#f020c0"/>
 <path d="M58 30L84 36L80 44H62Z" fill="#7a1020"/>
</g>
<g filter="url(#b0)">
 <path d="M11 24H22V27H11Z" fill="#24e044"/><path d="M18 22L30 14L31 16L22 24Z" fill="#20c83c"/>
 <path d="M28 30C34 24 48 24 56 30L58 44H26Z" fill="#72aa18"/>
 <path d="M30 28L44 25L50 28L38 30Z" fill="#a6bc20"/>
 <path d="M28 34L38 33L38 35L29 36Z" fill="#14200a"/><path d="M44 33L54 34L53 36L44 35Z" fill="#14200a"/>
 <ellipse cx="33" cy="38" rx="2.600" ry="1.600" fill="#1c2a0c"/><ellipse cx="48" cy="38" rx="2.600" ry="1.600" fill="#1c2a0c"/>
 <path d="M88 6V30M90 4V26" stroke="#5a2a00" stroke-width=".8"/>
 <path d="M3 10V40M6 6V42" stroke="#a03a10" stroke-width=".6"/>
</g></svg></div>
<div class="card" style="left:315.300px;top:747px;width:92.700px;height:60px">
<svg width="92.700" height="83" viewBox="0 0 93 83" preserveAspectRatio="none"><rect width="93" height="83" fill="url(#g6)"/>
<g filter="url(#b1)">
 <path d="M20 0H33L34 20L30 44H24L22 20Z" fill="#7a9ac8"/>
 <path d="M34 0H62L60 16L56 28L50 36L46 44H38L36 24Z" fill="#8eaedc"/>
 <path d="M5 0H20L18 8L10 10Z" fill="#f2f8ff"/><path d="M62 0H67V10L63 8Z" fill="#f2f8ff"/>
 <path d="M0 0H5L10 12L16 26L22 44H0Z" fill="#3a4a6c"/>
 <path d="M0 20L8 22L14 44H0Z" fill="#5c4c3c"/>
 <path d="M66 0H93V44H64L66 20Z" fill="#303c56"/>
 <path d="M80 0H93V44H82Z" fill="#222a3e"/>
 <path d="M48 30L56 28L60 44H46Z" fill="#7090c0"/>
</g></svg></div>

<!-- mask under clipped second row -->
<div class="abs" style="left:100px;top:789px;width:310px;height:71px;background:#0e0f11"></div>
<!-- generate -->
<div class="abs" style="left:110px;top:809px;width:298px;height:44px;border-radius:9px;background:linear-gradient(100deg,#5a58f6 0%,#4f5cf7 30%,#3f66f8 55%,#1b9dec 82%,#00c5df 100%)"></div>
<div class="abs" style="left:110px;top:821.5px;width:298px;text-align:center;font-size:16px;font-weight:700;line-height:20px;color:#fff;letter-spacing:.24px">Generate</div>
<div class="abs" style="left:376px;top:804px;width:32.500px;height:14px;border-radius:5px;background:#121214;border:1px solid #2a2a2e"></div>
<div class="abs" style="left:376px;top:804px;width:32.500px;height:14px;line-height:14px;text-align:center;font-size:11px;font-weight:700;color:#fff;letter-spacing:-.2px">Free</div>
<!-- collapse handle -->
<svg class="abs" style="left:426px;top:398px" width="12" height="68"><path d="M0 0C1 5 9 6 9 14V52C9 60 1 61 0 66Z" fill="#1b1c1f"/><path d="M5.500 27L2.500 33L5.500 39" fill="none" stroke="#6d7278" stroke-width="1.300" stroke-linecap="round" stroke-linejoin="round"/></svg>
<!-- panel icons -->
<svg class="abs" style="left:90px;top:0" width="337" height="860" viewBox="90 0 337 860" fill="none" stroke="#fff" stroke-width="1.600" stroke-linecap="round" stroke-linejoin="round">
 <path d="M382.700 21L394.300 32.600M394.300 21L382.700 32.600" stroke-width="1.700"/>
 <circle cx="399" cy="99.500" r="6.400" stroke="#9ea3aa" stroke-width="1.100"/>
 <path d="M398 97.300h1.200v5M397.500 102.500h3" stroke="#9ea3aa" stroke-width="1.100"/>
 <circle cx="398.900" cy="95.400" r=".8" fill="#9ea3aa" stroke="none"/>
 <!-- squiggle -->
 <path d="M183.500 159.600q1.500-2 3 0t3 0t3 0t3 0t3 0t3 0t3 0t3 0t3 0t3 0t3 0t3 0t1.500-1" stroke="#e0282e" stroke-width="1.100"/>
 <!-- add-image icon -->
 <g stroke="#c9c9cc" stroke-width="1.400">
  <path d="M163.300 280.500V275.800A1.800 1.800 0 0 0 161.500 274H151.800A1.800 1.800 0 0 0 150 275.800V285.400A1.800 1.800 0 0 0 151.800 287.200H157.500"/>
  <path d="M150.300 286L154.300 282.300L158 285.600"/>
  <circle cx="158.800" cy="278.300" r=".9" fill="#c9c9cc" stroke="none"/>
  <path d="M159.500 286.400H165.300M162.400 283.500V289.300"/>
 </g>
 <!-- sparkle -->
 <path d="M127.200 339.800C128 343.500 129.600 345.200 133.300 346C129.600 346.800 128 348.500 127.200 352.200C126.400 348.500 124.800 346.800 121.100 346C124.800 345.200 126.400 343.500 127.200 339.800Z" stroke="#5658f5" stroke-width="1.500"/>
 <path d="M133.600 337.600V340.800M132 339.200H135.200" stroke="#5658f5" stroke-width="1.200"/>
 <!-- aspect icons -->
 <rect x="149.400" y="432.400" width="16.400" height="16.400" rx="3" stroke="#fff" stroke-width="1.500" fill="#2a2d33"/>
 <rect x="250.600" y="430.800" width="14.600" height="19.800" rx="3" stroke="#cfd0d3" stroke-width="1.500" fill="#2b2e34"/>
 <rect x="348.800" y="433.600" width="20.400" height="14.600" rx="3" stroke="#cfd0d3" stroke-width="1.500" fill="#2b2e34"/>
</svg>


<!-- red highlight -->
<div class="abs" style="left:84px;top:46px;width:335px;height:813px;border:9px solid #e71d1d;"></div>
</div>
</body>
</html>
